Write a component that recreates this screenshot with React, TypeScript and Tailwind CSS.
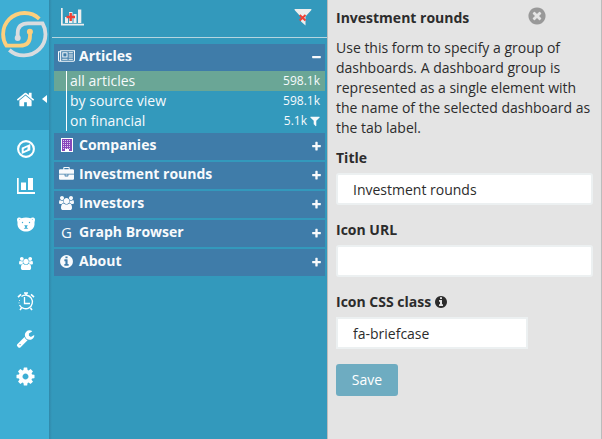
import React from "react";

const ICONS = {
  home: "M1472 992v480q0 26-19 45t-45 19h-384v-384h-256v384h-384q-26 0-45-19t-19-45v-480q0-1 .5-3t.5-3l575-474 575 474q1 2 1 6zm223-69l-62 74q-8 9-21 11h-3q-13 0-21-7l-692-577-692 577q-12 8-24 7-13-2-21-11l-62-74q-8-10-7-23.5t11-21.5l719-599q32-26 76-26t76 26l244 204v-195q0-14 9-23t23-9h192q14 0 23 9t9 23v408l219 182q10 8 11 21.5t-7 23.5z",
  cog: "M1152 896q0-106-75-181t-181-75-181 75-75 181 75 181 181 75 181-75 75-181zm512-109v222q0 12-8 23t-20 13l-185 28q-19 54-39 91 35 50 107 138 10 12 10 25t-9 23q-27 37-99 108t-94 71q-12 0-26-9l-138-108q-44 23-91 38-16 136-29 186-7 28-36 28h-222q-14 0-24.5-8.5t-11.5-21.5l-28-184q-49-16-90-37l-141 107q-10 9-25 9-14 0-25-11-126-114-165-168-7-10-7-23 0-12 8-23 15-21 51-66.5t54-70.5q-27-50-41-99l-183-27q-13-2-21-12.5t-8-23.5v-222q0-12 8-23t19-13l186-28q14-46 39-92-40-57-107-138-10-12-10-24 0-10 9-23 26-36 98.5-107.5t94.5-71.5q13 0 26 10l138 107q44-23 91-38 16-136 29-186 7-28 36-28h222q14 0 24.5 8.5t11.5 21.5l28 184q49 16 90 37l142-107q9-9 24-9 13 0 25 10 129 119 165 170 7 8 7 22 0 12-8 23-15 21-51 66.5t-54 70.5q26 50 41 98l183 28q13 2 21 12.5t8 23.5z",
  wrench: "M448 1472q0-26-19-45t-45-19-45 19-19 45 19 45 45 19 45-19 19-45zm644-420l-682 682q-37 37-90 37-52 0-91-37l-106-108q-38-36-38-90 0-53 38-91l681-681q39 98 114.5 173.5t173.5 114.5zm634-435q0 39-23 106-47 134-164.5 217.5t-258.5 83.5q-185 0-316.5-131.5t-131.5-316.5 131.5-316.5 316.5-131.5q58 0 121.5 16.5t107.5 46.5q16 11 16 28t-16 28l-293 169v224l193 107q5-3 79-48.5t135.5-81 70.5-35.5q15 0 23.5 10t8.5 25z",
  filter: "M1595 295q17 41-14 70l-493 493v742q0 42-39 59-13 5-25 5-27 0-45-19l-256-256q-19-19-19-45v-486l-493-493q-31-29-14-70 17-39 59-39h1280q42 0 59 39z",
  info: "M1152 1376v-160q0-14-9-23t-23-9h-96v-512q0-14-9-23t-23-9h-320q-14 0-23 9t-9 23v160q0 14 9 23t23 9h96v320h-96q-14 0-23 9t-9 23v160q0 14 9 23t23 9h448q14 0 23-9t9-23zm-128-896v-160q0-14-9-23t-23-9h-192q-14 0-23 9t-9 23v160q0 14 9 23t23 9h192q14 0 23-9t9-23zm640 416q0 209-103 385.5t-279.5 279.5-385.5 103-385.5-103-279.5-279.5-103-385.5 103-385.5 279.5-279.5 385.5-103 385.5 103 279.5 279.5 103 385.5z",
  close: "M1277 1122q0-26-19-45l-181-181 181-181q19-19 19-45 0-27-19-46l-90-90q-19-19-46-19-26 0-45 19l-181 181-181-181q-19-19-45-19-27 0-46 19l-90 90q-19 19-19 46 0 26 19 45l181 181-181 181q-19 19-19 45 0 27 19 46l90 90q19 19 46 19 26 0 45-19l181-181 181 181q19 19 45 19 27 0 46-19l90-90q19-19 19-46zm387-226q0 209-103 385.5t-279.5 279.5-385.5 103-385.5-103-279.5-279.5-103-385.5 103-385.5 279.5-279.5 385.5-103 385.5 103 279.5 279.5 103 385.5z",
  plus: "M1600 736v192q0 40-28 68t-68 28h-416v416q0 40-28 68t-68 28h-192q-40 0-68-28t-28-68v-416h-416q-40 0-68-28t-28-68v-192q0-40 28-68t68-28h416v-416q0-40 28-68t68-28h192q40 0 68 28t28 68v416h416q40 0 68 28t28 68z",
  minus: "M1600 736v192q0 40-28 68t-68 28h-1216q-40 0-68-28t-28-68v-192q0-40 28-68t68-28h1216q40 0 68 28t28 68z",
  briefcase: "M640 256h512v-128h-512v128zm1152 640v480q0 66-47 113t-113 47h-1472q-66 0-113-47t-47-113v-480h672v160q0 26 19 45t45 19h320q26 0 45-19t19-45v-160h672zm-768 0v128h-256v-128h256zm768-480v384h-1792v-384q0-66 47-113t113-47h352v-160q0-40 28-68t68-28h576q40 0 68 28t28 68v160h352q66 0 113 47t47 113z",
  users: "M593 896q-162 5-265 128h-134q-82 0-138-40.5t-56-118.5q0-353 124-353 6 0 43.5 21t97.5 42.5 119 21.5q67 0 133-23-5 37-5 66 0 139 81 256zm1071 637q0 120-73 189.5t-194 69.5h-874q-121 0-194-69.5t-73-189.5q0-53 3.5-103.5t14-109 26.5-108.5 43-97.5 62-81 85.5-53.5 111.5-20q10 0 43 21.5t73 48 107 48 135 21.5 135-21.5 107-48 73-48 43-21.5q61 0 111.5 20t85.5 53.5 62 81 43 97.5 26.5 108.5 14 109 3.5 103.5zm-1024-1277q0 106-75 181t-181 75-181-75-75-181 75-181 181-75 181 75 75 181zm704 384q0 159-112.5 271.5t-271.5 112.5-271.5-112.5-112.5-271.5 112.5-271.5 271.5-112.5 271.5 112.5 112.5 271.5zm576 225q0 78-56 118.5t-138 40.5h-134q-103-123-265-128 81-117 81-256 0-29-5-66 66 23 133 23 59 0 119-21.5t97.5-42.5 43.5-21q124 0 124 353zm-128-609q0 106-75 181t-181 75-181-75-75-181 75-181 181-75 181 75 75 181z",
  newspaper: "M1024 512h-384v384h384v-384zm128 640v128h-640v-128h640zm0-768v640h-640v-640h640zm640 768v128h-512v-128h512zm0-256v128h-512v-128h512zm0-256v128h-512v-128h512zm0-256v128h-512v-128h512zm-1536 960v-960h-128v960q0 26 19 45t45 19 45-19 19-45zm1664 0v-1088h-1536v1088q0 33-11 64h1483q26 0 45-19t19-45zm128-1216v1216q0 80-56 136t-136 56h-1664q-80 0-136-56t-56-136v-1088h256v-128h1792z",
};

type GlyphProps = { name: keyof typeof ICONS; box?: string; className: string };

function Glyph({ name, box = "0 0 1792 1792", className }: GlyphProps) {
  return (
    <svg viewBox={box} className={`shrink-0 fill-current ${className}`}>
      <path d={ICONS[name]} />
    </svg>
  );
}

function Logo() {
  return (
    <svg viewBox="0 0 49 70" className="h-[70px] w-[49px]" fill="none" strokeWidth="3.8">
      <path stroke="#fdcf7c" d="M39.300 18.800A21.200 21.200 0 0 0 24.300 13A21.200 21.200 0 0 0 3.100 34.200A21.200 21.200 0 0 0 6.500 45.700H20Q30 45.700 30 36V32" />
      <path stroke="#d9dcdf" d="M9.300 50A21.200 21.200 0 0 0 24.300 55.400A21.200 21.200 0 0 0 45.500 34.200A21.200 21.200 0 0 0 42.500 23.300H28Q17.700 23.300 17.700 33V38" />
      <circle cx="29.900" cy="31.700" r="3" fill="#fdcf7c" />
      <circle cx="17.700" cy="38" r="3" fill="#d9dcdf" />
    </svg>
  );
}

function Compass() {
  return (
    <svg viewBox="0 0 18 18" className="size-[18px]">
      <circle cx="9" cy="9" r="7.900" fill="none" stroke="#fff" strokeWidth="2.100" />
      <path fillRule="evenodd" fill="#fff" d="M13.300 4v6.200L4.700 14V7.800zM10.500 7L6.700 8.900v2.400L10.500 9.300z" />
    </svg>
  );
}

function BarChart() {
  return (
    <svg viewBox="0 0 18 16" className="h-4 w-[18px]" fill="#fff">
      <path d="M0 0h1.700v14H18v2H0zM4 4.500h5v7.500H4zM11 0h5v12h-5z" />
    </svg>
  );
}

function Bear() {
  return (
    <svg viewBox="0 0 18 15" className="h-[15px] w-[18px]">
      <path fill="#fff" d="M0 2.500C0 .5 3 0 4.500 1.200C7 .4 11 .4 13.500 1.200C15 0 18 .5 18 2.500C18 4 17.500 4.500 17.500 5.500C17.800 8.500 17 11 14.200 13C11 15 7 15 3.800 13C1 11 .2 8.500 .5 5.500C.5 4.500 0 4 0 2.500z" />
      <g fill="#3eaed4">
        <circle cx="5.500" cy="5.500" r=".7" />
        <circle cx="12.500" cy="5.500" r=".7" />
        <path d="M7.200 8.300h3.600l-1.200 1.900L11.300 11.700h-4.600l1.700-1.500z" />
        <path d="M2.200 2.200l1.200-.5-.8 1.400zM15.800 2.200l-1.200-.5.8 1.400z" />
      </g>
    </svg>
  );
}

function AlarmClock() {
  return (
    <svg viewBox="0 0 18 19" className="h-[19px] w-[18px]" fill="none" stroke="#fff">
      <path d="M4.500 4.500A6.800 6.800 0 1 1 2.500 13M7.500 5v6.500H13" strokeWidth="1.300" />
      <path d="M7 1h4M9 1v2M1 5.200L4 2.300M14 2.300l3 2.900M4.500 16L3 18M13.500 16l1.500 2" strokeWidth="1.600" />
      <path d="M2.500 8v.8M2 10.500v.8" />
    </svg>
  );
}

function AddChart() {
  return (
    <svg viewBox="0 0 24 18" className="h-[18px] w-6" fill="#eeeeed">
      <path d="M0 0h1.700v15.700H23V17.500H0zM4 9h3v6H4zM8 4h3.500v11H8zM12.500 6h3v9h-3zM17 1.500h3.300V15H17z" />
      <path fill="#ee4035" d="M8.500 5h2.400v2.700h3.100v2.500h-3.100V13H8.500v-2.800H5.500V7.700h3z" />
    </svg>
  );
}

function ClearFilter() {
  return (
    <svg viewBox="0 0 18 18" className="h-[18px] w-[18px]">
      <path fill="#eeeeed" d="M.8 1h16.400q.6.700 0 1.300L11.500 8.500v9L7 13.500V9L.8 2.300Q.2 1.600.8 1z" />
      <path stroke="#ee4035" strokeWidth="2" d="M5.700 7l5.800 5.500M11.500 7L5.700 12.500" />
    </svg>
  );
}

function Building() {
  return (
    <svg viewBox="0 0 12 14" className="h-[14px] w-3">
      <path fill="#fff" d="M0 0h12v14H0z" />
      <path fill="#8848bb" d="M1 1h10v12H8v-2H4v2H1z" />
      <path stroke="#dccdf0" strokeWidth="1" strokeDasharray="1 1" d="M2 2.500h8M2 4.500h8M2 6.500h8M2 8.500h8M2 10.500h8" />
    </svg>
  );
}

const GROUPS = [
  { label: "Companies", icon: <Building /> },
  { label: "Investment rounds", icon: <Glyph name="briefcase" className="size-[15px]" /> },
  { label: "Investors", icon: <Glyph name="users" box="0 0 1920 1792" className="h-[14px] w-[15px]" /> },
  { label: "Graph Browser", icon: <span className="text-[15px] leading-5">G</span> },
  { label: "About", icon: <Glyph name="info" className="size-[15px]" /> },
];

function GroupHeader({ icon, label, open }: { icon: React.ReactNode; label: string; open?: boolean }) {
  return (
    <div className="flex h-[27px] items-center bg-[#3f7ca9] pl-1 pr-[3px] text-[#f8fafc]">
      <span className="flex w-[17px] justify-center pb-[3px]">{icon}</span>
      <span className="ml-1 flex-1 pb-[3px] text-[14px] leading-5 font-bold">{label}</span>
      <Glyph name={open ? "minus" : "plus"} className="size-[11px]" />
    </div>
  );
}

function ArticleRow({ label, count, active, filtered }: { label: string; count: string; active?: boolean; filtered?: boolean }) {
  return (
    <div className={`flex h-5 pl-3 ${active ? "bg-[#6aa696]" : ""}`}>
      <div className="flex flex-1 items-center border-l border-white pl-[3px] pr-[5px] text-[14px] leading-5 text-[#f6fafc]">
        <span className="flex-1">{label}</span>
        <span className="text-[12px]">{count}</span>
        {filtered && <Glyph name="filter" className="ml-[2px] -mr-[1px] size-3" />}
      </div>
    </div>
  );
}

function Sidebar() {
  return (
    <nav className="flex w-[49px] flex-col bg-[#3eaed4] text-white">
      <Logo />
      <div className="flex h-[60px] items-center bg-[#319ac1] pb-[2px] pl-4">
        <Glyph name="home" className="size-[19px]" />
        <span className="ml-[7px] border-y-4 border-r-5 border-y-transparent border-r-white" />
      </div>
      <div className="flex h-[38px] items-center pl-[17px]"><Compass /></div>
      <div className="flex h-[38px] items-center pb-[2px] pl-[17px]"><BarChart /></div>
      <div className="flex h-[38px] items-center pb-px pl-[17px]"><Bear /></div>
      <div className="flex h-[38px] items-center pl-[19px]">
        <Glyph name="users" box="0 0 1920 1792" className="h-[13px] w-[14px]" />
      </div>
      <div className="flex h-[38px] items-center pl-[17px]"><AlarmClock /></div>
      <div className="flex h-[38px] items-center pb-[2px] pl-4"><Glyph name="wrench" className="size-[19px]" /></div>
      <div className="flex h-[38px] items-center pb-px pl-[15px]"><Glyph name="cog" className="size-[21px]" /></div>
    </nav>
  );
}

export default function App() {
  return (
    <div className="flex h-[439px] w-[602px] overflow-hidden font-['Open_Sans',sans-serif]">
      <Sidebar />
      <div className="w-[3px] bg-linear-to-r from-[#3188a9] to-[#3399bc]" />
      <section className="w-[275px] bg-[#3399bc]">
        <div className="flex h-[38px] items-start justify-between border-b border-[#b5d5e0] pt-2 pl-[9px] pr-[15px]">
          <AddChart />
          <ClearFilter />
        </div>
        <div className="pt-1.5 pr-[2px] pl-[2px]">
          <GroupHeader label="Articles" open icon={<Glyph name="newspaper" box="0 0 2048 1792" className="h-[15px] w-[17px]" />} />
          <ArticleRow label="all articles" count="598.1k" active />
          <ArticleRow label="by source view" count="598.1k" />
          <ArticleRow label="on financial" count="5.1k" filtered />
          <div className="flex flex-col gap-0.5 pt-0.5">
            {GROUPS.map((g) => <GroupHeader key={g.label} icon={g.icon} label={g.label} />)}
          </div>
        </div>
      </section>
      <form className="flex w-[275px] flex-col border-x border-[#bcbcbc] bg-[#e4e4e4] pl-2 pr-2 text-[14px] leading-5 text-[#2c2c2c]">
        <div className="flex justify-between pt-[6px] pr-[46px]">
          <h1 className="pt-[2px] font-bold">Investment rounds</h1>
          <Glyph name="close" className="size-5 text-[#999]" />
        </div>
        <p className="mt-[10px] -mr-2 w-[262px]">
          Use this form to specify a group of<br />dashboards. A dashboard group is<br />represented as a single element with<br />the name of the selected dashboard as<br />the tab label.
        </p>
        <label className="mt-[10px] font-bold">Title</label>
        <input readOnly value="Investment rounds" className="mt-[5px] h-8 w-[257px] rounded-[3px] border-2 border-[#ecf0f1] bg-white px-[15px]" />
        <label className="mt-[15px] font-bold">Icon URL</label>
        <input readOnly value="" className="mt-[5px] h-8 w-[257px] rounded-[3px] border-2 border-[#ecf0f1] bg-white px-[15px]" />
        <label className="mt-[15px] flex items-center gap-[3px] font-bold">
          Icon CSS class <Glyph name="info" className="size-[14px]" />
        </label>
        <input readOnly value="fa-briefcase" className="mt-[5px] h-8 w-48 border-2 border-[#ecf0f1] bg-white px-[15px]" />
        <button type="button" className="mt-[15px] h-8 w-[62px] rounded-[3px] bg-[#6eacc1] text-white">Save</button>
      </form>
    </div>
  );
}
